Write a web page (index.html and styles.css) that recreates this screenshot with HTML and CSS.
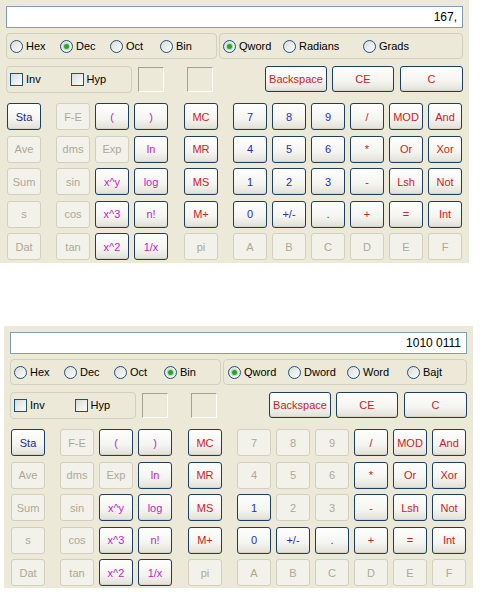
FILE: index.html
```html
<!DOCTYPE html>
<html>
	<head>
		<meta charset="UTF-8">
		<title>Calculator</title>
		<link rel="stylesheet" href="styles.css">
	</head>
	<body>
		<!-- Dec / Qword -->
		<div class="calc">
			<div class="display">167,</div>
			<div class="row row-modes">
				<div class="group g-base">
					<span class="radio w50"><i></i>Hex</span>
					<span class="radio w50 on"><i></i>Dec</span>
					<span class="radio w50"><i></i>Oct</span>
					<span class="radio"><i></i>Bin</span>
				</div>
				<div class="group g-unit">
					<span class="radio w60 on"><i></i>Qword</span>
					<span class="radio w80"><i></i>Radians</span>
					<span class="radio"><i></i>Grads</span>
				</div>
			</div>
			<div class="row row-ctrl">
				<div class="group g-inv">
					<span class="check"><i></i>Inv</span>
					<span class="check"><i></i>Hyp</span>
				</div>
				<span class="sunk"></span>
				<span class="sunk sunk2"></span>
				<div class="clear-keys">
					<a class="btn red bk">Backspace</a>
					<a class="btn red ce">CE</a>
					<a class="btn red c">C</a>
				</div>
			</div>
			<div class="keys">
				<div class="block b1">
					<a class="btn navy">Sta</a>
					<a class="btn off">Ave</a>
					<a class="btn off">Sum</a>
					<a class="btn off">s</a>
					<a class="btn off">Dat</a>
				</div>
				<div class="block b3">
					<a class="btn off">F-E</a><a class="btn pink">(</a><a class="btn pink">)</a>
					<a class="btn off">dms</a><a class="btn off">Exp</a><a class="btn pink">ln</a>
					<a class="btn off">sin</a><a class="btn pink">x^y</a><a class="btn pink">log</a>
					<a class="btn off">cos</a><a class="btn pink">x^3</a><a class="btn pink">n!</a>
					<a class="btn off">tan</a><a class="btn pink">x^2</a><a class="btn pink">1/x</a>
				</div>
				<div class="block b1 mem">
					<a class="btn red">MC</a>
					<a class="btn red">MR</a>
					<a class="btn red">MS</a>
					<a class="btn red">M+</a>
					<a class="btn off">pi</a>
				</div>
				<div class="block b6">
					<a class="btn blue">7</a><a class="btn blue">8</a><a class="btn blue">9</a><a class="btn red">/</a><a class="btn red">MOD</a><a class="btn red">And</a>
					<a class="btn blue">4</a><a class="btn blue">5</a><a class="btn blue">6</a><a class="btn red">*</a><a class="btn red">Or</a><a class="btn red">Xor</a>
					<a class="btn blue">1</a><a class="btn blue">2</a><a class="btn blue">3</a><a class="btn red">-</a><a class="btn red">Lsh</a><a class="btn red">Not</a>
					<a class="btn blue">0</a><a class="btn blue">+/-</a><a class="btn blue">.</a><a class="btn red">+</a><a class="btn red">=</a><a class="btn red">Int</a>
					<a class="btn off">A</a><a class="btn off">B</a><a class="btn off">C</a><a class="btn off">D</a><a class="btn off">E</a><a class="btn off">F</a>
				</div>
			</div>
		</div>

		<!-- Bin / Qword -->
		<div class="calc calc-bin">
			<div class="display">1010 0111</div>
			<div class="row row-modes">
				<div class="group g-base">
					<span class="radio w50"><i></i>Hex</span>
					<span class="radio w50"><i></i>Dec</span>
					<span class="radio w50"><i></i>Oct</span>
					<span class="radio on"><i></i>Bin</span>
				</div>
				<div class="group g-unit g-word">
					<span class="radio w60 on"><i></i>Qword</span>
					<span class="radio w59"><i></i>Dword</span>
					<span class="radio w60"><i></i>Word</span>
					<span class="radio"><i></i>Bajt</span>
				</div>
			</div>
			<div class="row row-ctrl">
				<div class="group g-inv">
					<span class="check"><i></i>Inv</span>
					<span class="check"><i></i>Hyp</span>
				</div>
				<span class="sunk"></span>
				<span class="sunk sunk2"></span>
				<div class="clear-keys">
					<a class="btn red bk">Backspace</a>
					<a class="btn red ce">CE</a>
					<a class="btn red c">C</a>
				</div>
			</div>
			<div class="keys">
				<div class="block b1">
					<a class="btn navy">Sta</a>
					<a class="btn off">Ave</a>
					<a class="btn off">Sum</a>
					<a class="btn off">s</a>
					<a class="btn off">Dat</a>
				</div>
				<div class="block b3">
					<a class="btn off">F-E</a><a class="btn pink">(</a><a class="btn pink">)</a>
					<a class="btn off">dms</a><a class="btn off">Exp</a><a class="btn pink">ln</a>
					<a class="btn off">sin</a><a class="btn pink">x^y</a><a class="btn pink">log</a>
					<a class="btn off">cos</a><a class="btn pink">x^3</a><a class="btn pink">n!</a>
					<a class="btn off">tan</a><a class="btn pink">x^2</a><a class="btn pink">1/x</a>
				</div>
				<div class="block b1 mem">
					<a class="btn red">MC</a>
					<a class="btn red">MR</a>
					<a class="btn red">MS</a>
					<a class="btn red">M+</a>
					<a class="btn off">pi</a>
				</div>
				<div class="block b6">
					<a class="btn off">7</a><a class="btn off">8</a><a class="btn off">9</a><a class="btn red">/</a><a class="btn red">MOD</a><a class="btn red">And</a>
					<a class="btn off">4</a><a class="btn off">5</a><a class="btn off">6</a><a class="btn red">*</a><a class="btn red">Or</a><a class="btn red">Xor</a>
					<a class="btn blue">1</a><a class="btn off">2</a><a class="btn off">3</a><a class="btn red">-</a><a class="btn red">Lsh</a><a class="btn red">Not</a>
					<a class="btn blue">0</a><a class="btn blue">+/-</a><a class="btn blue">.</a><a class="btn red">+</a><a class="btn red">=</a><a class="btn red">Int</a>
					<a class="btn off">A</a><a class="btn off">B</a><a class="btn off">C</a><a class="btn off">D</a><a class="btn off">E</a><a class="btn off">F</a>
				</div>
			</div>
		</div>
	</body>
</html>
```

FILE: styles.css
```css
* {
	margin: 0;
	padding: 0;
	box-sizing: border-box;
}

body {
	font-family: "Liberation Sans", Arial, sans-serif;
	font-size: 11px;
	color: #000;
	background: #fff;
}

a {
	cursor: default;
	text-decoration: none;
}

.calc {
	width: 469px;
	height: 263px;
	padding: 6px 6px 0 6px;
	background: #ece9d8;
}

.calc-bin {
	margin: 63px 0 0 4px;
	height: 262px;
}

.display {
	height: 22px;
	border: 1px solid #7f9db9;
	background: #fff;
	text-align: right;
	padding: 0 5px;
	line-height: 20px;
	font-size: 12px;
}

.row {
	display: flex;
}

.row-modes {
	margin-top: 5px;
	height: 26px;
	gap: 2px;
}

.group {
	border: 1px solid #d3cfbd;
	border-radius: 4px;
	display: flex;
	align-items: center;
	padding-left: 3px;
}

.g-base {
	width: 211px;
}

.g-unit {
	width: 244px;
}

.g-word {
	padding-left: 4px;
}

/* radio buttons */
.radio,
.check {
	display: flex;
	align-items: center;
}

.radio i,
.check i {
	width: 13px;
	height: 13px;
	border: 1px solid #1c5180;
	margin-right: 3px;
	position: relative;
	background: linear-gradient(135deg, #dcdcd6, #fcfcfb);
}

.radio i {
	border-radius: 50%;
}

.radio.on i::after {
	content: "";
	position: absolute;
	left: 3px;
	top: 3px;
	width: 5px;
	height: 5px;
	border-radius: 50%;
	background: #2aa42a;
	box-shadow: 0 0 0 1px #b4ddb0;
}

.w50 { width: 50px; }
.w59 { width: 59px; }
.w60 { width: 60px; }
.w80 { width: 80px; }

.row-ctrl {
	margin-top: 6px;
	height: 28px;
	align-items: center;
}

.g-inv {
	width: 126px;
	height: 27px;
}

.check {
	width: 62px;
}

.sunk {
	width: 26px;
	height: 25px;
	margin-left: 6px;
	border: 1px solid;
	border-color: #a5a190 #fff #fff #a5a190;
}

.sunk2 {
	margin-left: 23px;
}

.clear-keys {
	display: flex;
	margin-left: 52px;
	height: 26px;
}

.clear-keys .btn {
	width: 62px;
	height: 26px;
}

.clear-keys .ce {
	margin-left: 5px;
}

.clear-keys .c {
	margin-left: 6px;
	width: 63px;
}

/* key pad */
.keys {
	display: flex;
	margin-top: 10px;
	padding-left: 1px;
}

.block {
	display: grid;
	grid-template-columns: 34px;
	grid-auto-rows: 27px;
	gap: 5.5px 5px;
}

.b3 {
	grid-template-columns: repeat(3, 34px);
	margin-left: 15px;
}

.mem {
	margin-left: 16px;
}

.b6 {
	grid-template-columns: repeat(6, 34px);
	margin-left: 15px;
}

.btn {
	display: flex;
	align-items: center;
	justify-content: center;
	border: 1px solid #1d3e5e;
	border-radius: 3px;
	background: linear-gradient(#fefefe, #f4f4f0 60%, #e2e0d6);
	box-shadow: inset 0 -1px 0 #d6d3c6;
	white-space: nowrap;
}

.btn.off {
	border-color: #d2cfbf;
	background: #f3f2ea;
	box-shadow: none;
	color: #aca899;
}

.navy { color: #1a2a86; }
.blue { color: #2b2bc0; }
.red { color: #cc2222; }
.pink { color: #c21ec2; }
```
